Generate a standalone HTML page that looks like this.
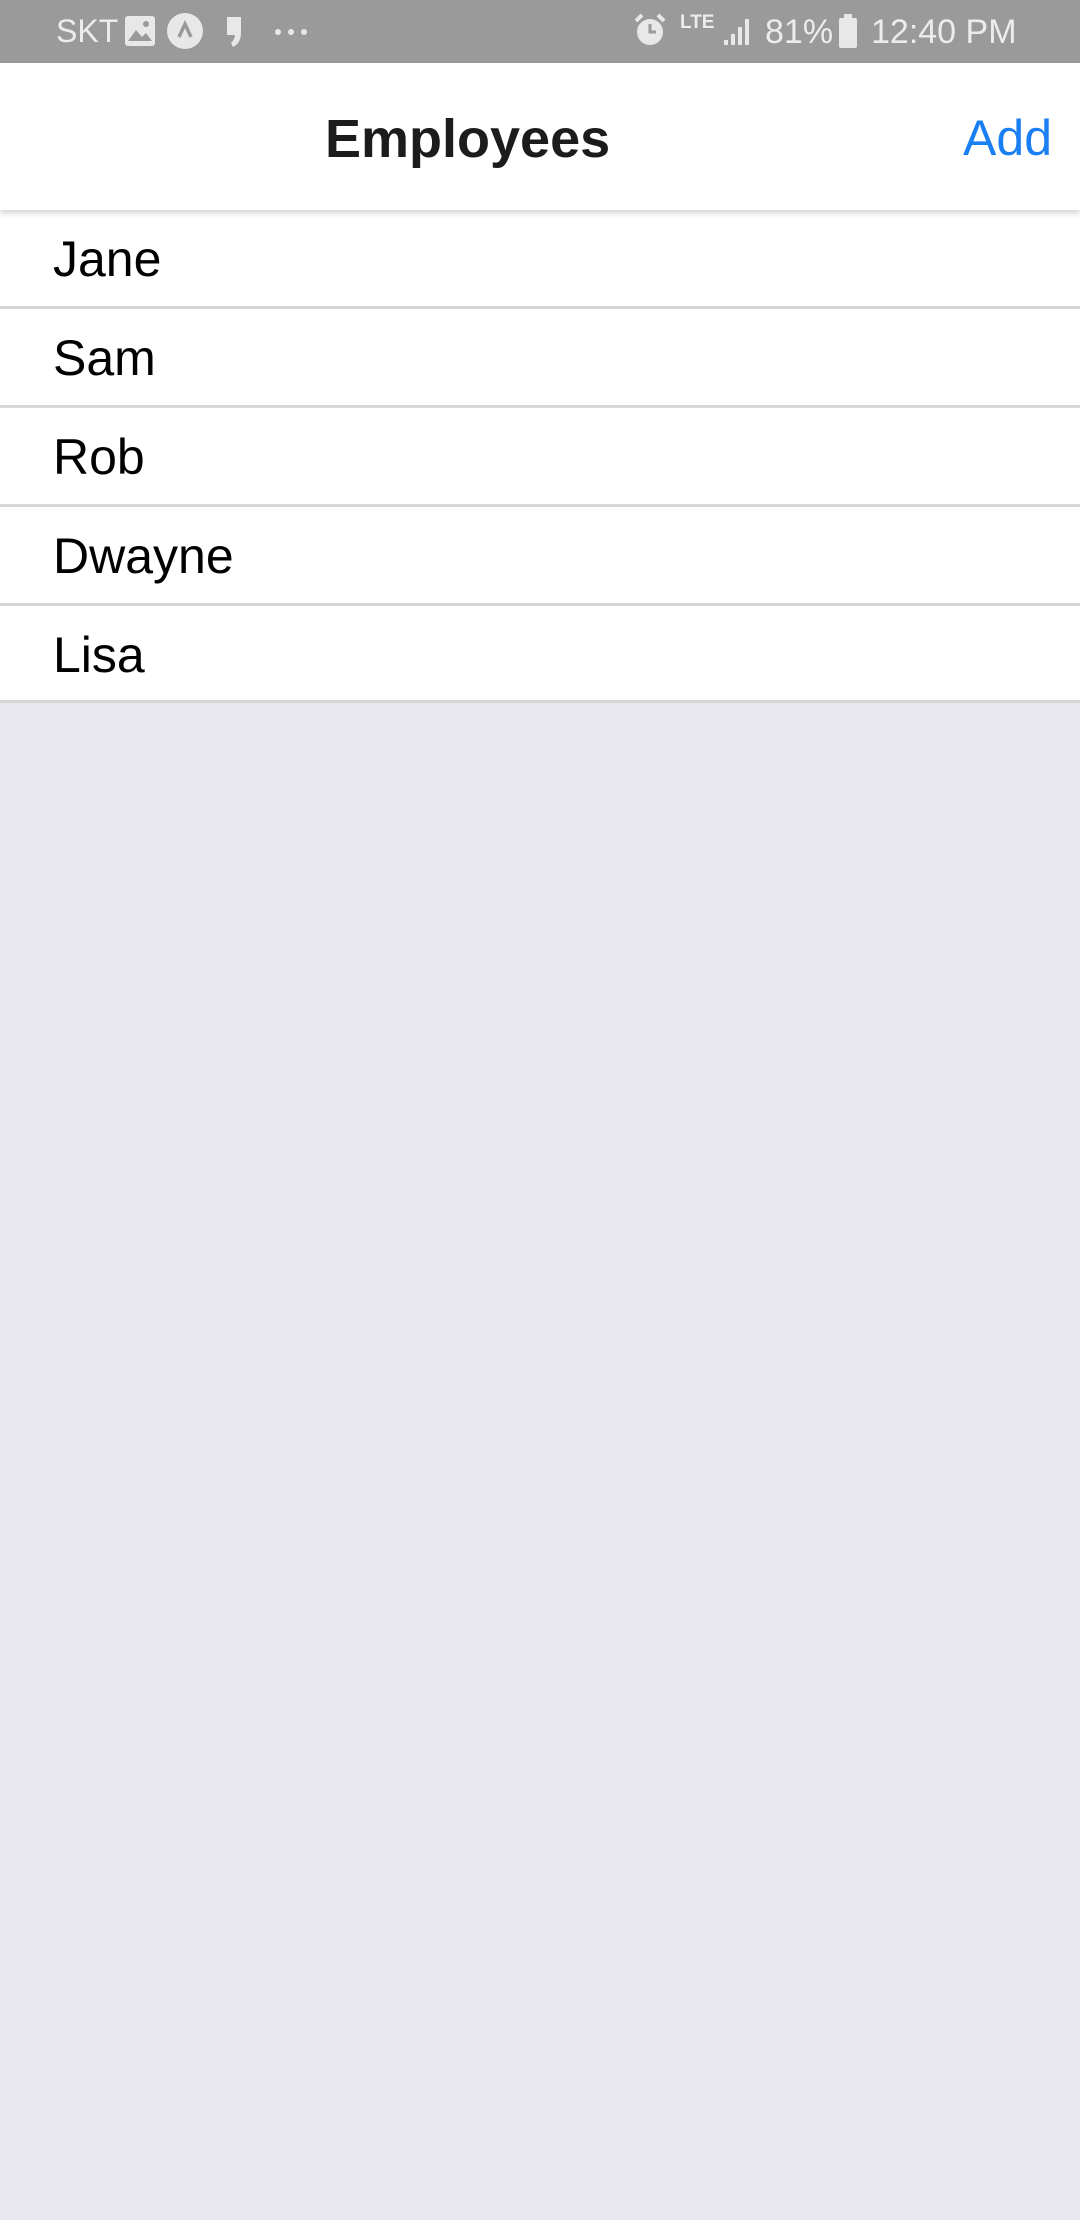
<!DOCTYPE html>
<html><head><meta charset="utf-8"><style>
body{margin:0;width:1080px;height:2220px;background:#e9e8ee;font-family:"Liberation Sans",sans-serif;position:relative;overflow:hidden}
.sb{position:absolute;left:0;top:0;width:1080px;height:63px;background:#9a9a9a;color:#ececec;font-size:34px}
.sb span{position:absolute;top:13px}
.hd{position:absolute;left:0;top:63px;width:1080px;height:147px;background:#fff;box-shadow:0 3px 6px rgba(0,0,0,.18);z-index:2}
.t{position:absolute;left:325px;top:45px;font-weight:bold;font-size:54px;color:#1c1c1c}
.add{position:absolute;right:28px;top:46px;font-size:50px;color:#1a7ff2}
.row{position:absolute;left:0;width:1080px;height:96px;background:#fff;border-bottom:3px solid #d6d6d9}
.row span{position:absolute;left:53px;top:20px;font-size:50px;color:#000}
</style></head><body>
<div class="sb">
<span style="left:56px;font-size:32px">SKT</span>
<svg style="position:absolute;left:124px;top:15px" width="32" height="32"><rect x="1" y="1" width="30" height="30" rx="3" fill="#e8e8e8"/><path d="M4 26 L12 15 L18 22 L22 18 L28 26Z" fill="#9a9a9a"/><circle cx="22" cy="9" r="3" fill="#9a9a9a"/></svg>
<svg style="position:absolute;left:167px;top:13px" width="36" height="36"><circle cx="18" cy="18" r="18" fill="#e8e8e8"/><path d="M12 24 L18 11 L24 24" stroke="#9a9a9a" stroke-width="3.5" fill="none"/></svg>
<svg style="position:absolute;left:225px;top:15px" width="18" height="32"><path d="M2 2 H16 V18 Q16 28 8 32 L6 28 Q10 24 10 20 H2Z" fill="#e8e8e8"/></svg>
<svg style="position:absolute;left:274px;top:28px" width="36" height="8"><circle cx="4" cy="4" r="3" fill="#e8e8e8"/><circle cx="17" cy="4" r="3" fill="#e8e8e8"/><circle cx="30" cy="4" r="3" fill="#e8e8e8"/></svg>
<svg style="position:absolute;left:633px;top:13px" width="34" height="34"><circle cx="17" cy="19" r="13" fill="#e8e8e8"/><path d="M17 11 V19 H23" stroke="#9a9a9a" stroke-width="3" fill="none"/><path d="M3 8 L9 2 M31 8 L25 2" stroke="#e8e8e8" stroke-width="4"/></svg>
<span style="left:680px;top:12px;font-size:19px;font-weight:bold">LTE</span>
<svg style="position:absolute;left:722px;top:17px" width="32" height="30"><path d="M2 28h4v-5h-4z M9 28h4v-11h-4z M16 28h4v-18h-4z M23 28h4v-26h-4z" fill="#e8e8e8"/></svg>
<span style="left:765px;font-size:34px">81%</span>
<svg style="position:absolute;left:839px;top:14px" width="18" height="34"><rect x="5" y="0" width="8" height="4" fill="#e8e8e8"/><rect x="0" y="4" width="18" height="30" rx="2" fill="#e8e8e8"/></svg>
<span style="left:871px;font-size:34px">12:40 PM</span>
</div>
<div class="hd"><div class="t">Employees</div><div class="add">Add</div></div>
<div class="row" style="top:210px"><span>Jane</span></div>
<div class="row" style="top:309px"><span>Sam</span></div>
<div class="row" style="top:408px"><span>Rob</span></div>
<div class="row" style="top:507px"><span>Dwayne</span></div>
<div class="row" style="top:606px;height:94px"><span>Lisa</span></div>
</body></html>
